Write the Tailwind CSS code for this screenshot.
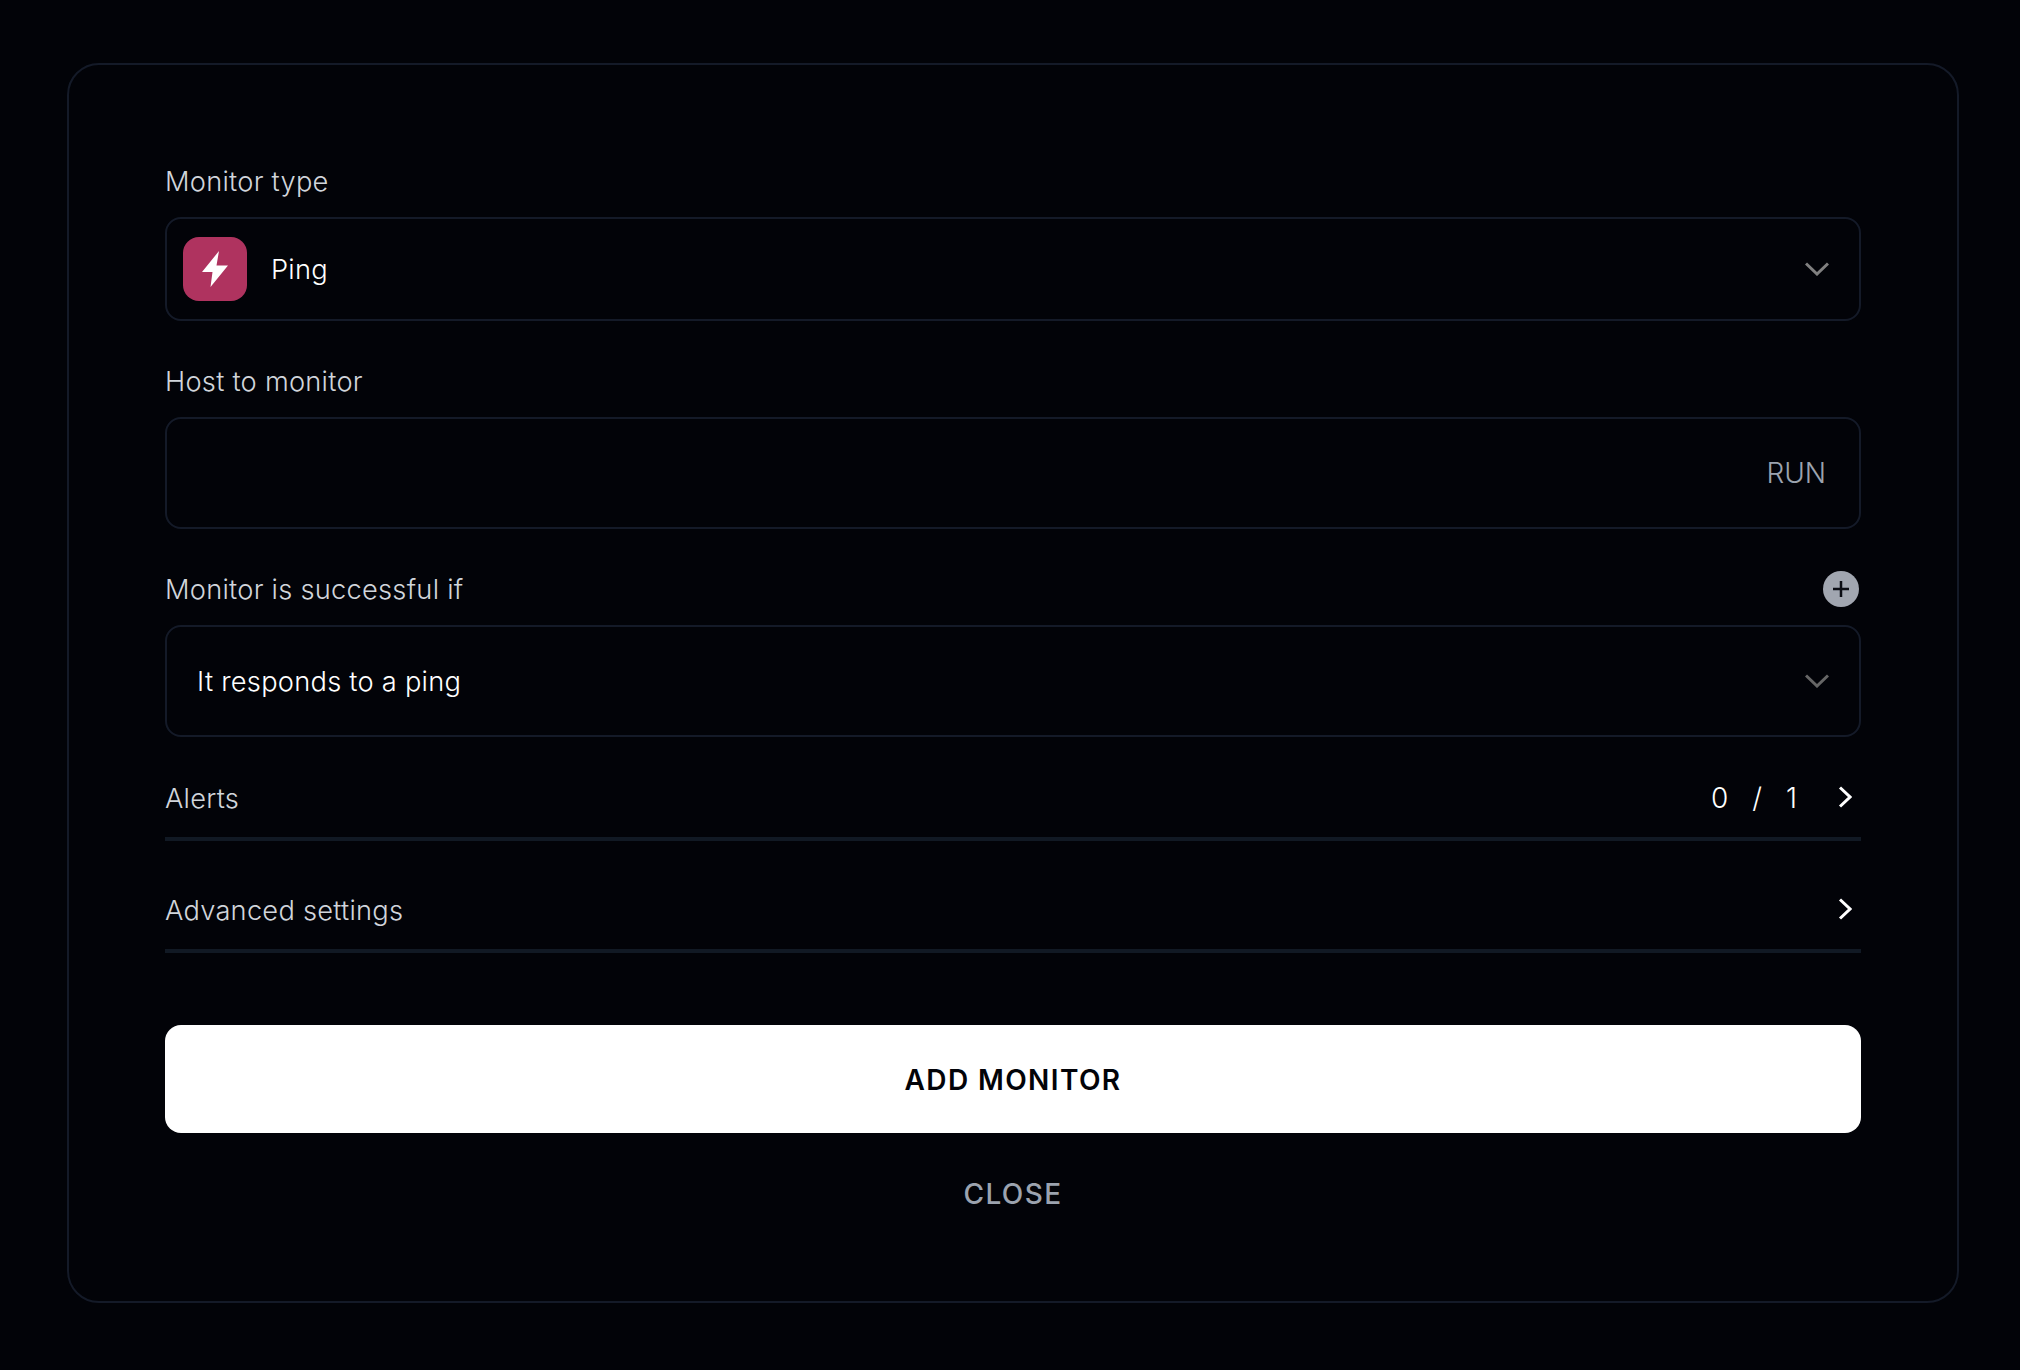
<!DOCTYPE html>
<html lang="en">
<head>
  <meta charset="UTF-8" />
  <script src="https://cdn.jsdelivr.net/npm/@tailwindcss/browser@4"></script>
  <title>Add monitor</title>
</head>
<body class="bg-[#020308] h-[1370px] overflow-hidden font-['Inter',sans-serif] font-[360] text-[27.25px] tracking-[0.25px] leading-[34px] pt-[63px] px-[67px]">

  <!-- card -->
  <div class="w-[1892px] h-[1240px] border-2 border-[#141a28] rounded-[32px] px-[96px] pt-[100px] flex flex-col">

    <!-- type -->
    <label class="text-[#d1d5db] mb-[18px]">Monitor type</label>
    <div class="h-[104px] border-2 border-[#141a28] rounded-2xl flex items-center pl-[16px] pr-[30px]">
      <div class="w-16 h-16 rounded-2xl bg-[#af335f] flex items-center justify-center">
        <svg class="w-[26px] h-[36px]" viewBox="0 0 26 36"><path d="M17 0 L0 21 L10.5 21 L8.5 36 L26 14.5 L14.5 14.5 Z" fill="#fff"/></svg>
      </div>
      <span class="text-white ml-6 flex-1 pt-[2px]">Ping</span>
      <svg class="w-6 h-[14px]" viewBox="0 0 24 14" fill="none" stroke="#808080" stroke-width="3"><path d="M1 1.5 L12 12 L23 1.5"/></svg>
    </div>

    <!-- host -->
    <label class="text-[#d1d5db] mt-[44px] mb-[18px]">Host to monitor</label>
    <div class="h-[112px] border-2 border-[#141a28] rounded-2xl flex items-center justify-end pr-[33px]">
      <span class="text-[#9ca3af] text-[28px] tracking-normal">RUN</span>
    </div>

    <!-- condition -->
    <div class="mt-[42px] mb-[18px] flex items-center justify-between pr-[2px]">
      <label class="text-[#d1d5db] pt-[2px]">Monitor is successful if</label>
      <div class="w-9 h-9 rounded-full bg-[#a1a6b0] flex items-center justify-center">
        <svg class="w-5 h-5" viewBox="0 0 20 20" fill="none" stroke="#0b0d14" stroke-width="2.5"><path d="M10 2 V18 M2 10 H18"/></svg>
      </div>
    </div>
    <div class="h-[112px] border-2 border-[#141a28] rounded-2xl flex items-center pl-[30px] pr-[30px]">
      <span class="text-white flex-1 pt-[2px]">It responds to a ping</span>
      <svg class="w-6 h-[14px]" viewBox="0 0 24 14" fill="none" stroke="#666" stroke-width="3"><path d="M1 1.5 L12 12 L23 1.5"/></svg>
    </div>

    <!-- alerts -->
    <div class="mt-[43px] pb-[21px] border-b-4 border-[#111924] flex items-center justify-between">
      <span class="text-[#d1d5db] pt-[2px]">Alerts</span>
      <div class="flex items-center text-white text-[28px] tracking-normal pr-[9px]">
        <span>0</span><span class="ml-6">/</span><span class="ml-6">1</span>
        <svg class="w-[14px] h-[22px] ml-[41px] mb-[2px]" viewBox="0 0 14 22" fill="none" stroke="#fff" stroke-width="3"><path d="M2 1.5 L12 11 L2 20.5"/></svg>
      </div>
    </div>

    <!-- advanced -->
    <div class="mt-[51px] pb-[21px] border-b-4 border-[#111924] flex items-center justify-between">
      <span class="text-[#d1d5db] pt-[2px]">Advanced settings</span>
      <svg class="w-[14px] h-[22px] mr-[9px] mb-[2px]" viewBox="0 0 14 22" fill="none" stroke="#fff" stroke-width="3"><path d="M2 1.5 L12 11 L2 20.5"/></svg>
    </div>

    <!-- actions -->
    <button class="mt-[72px] h-[108px] shrink-0 bg-white rounded-2xl text-[#020308] text-[28px] font-semibold tracking-[1.4px] pt-[2px]">ADD MONITOR</button>
    <button class="mt-[44px] text-[#9ca3af] text-[28px] font-medium tracking-[1.4px]">CLOSE</button>
  </div>

</body>
</html>
